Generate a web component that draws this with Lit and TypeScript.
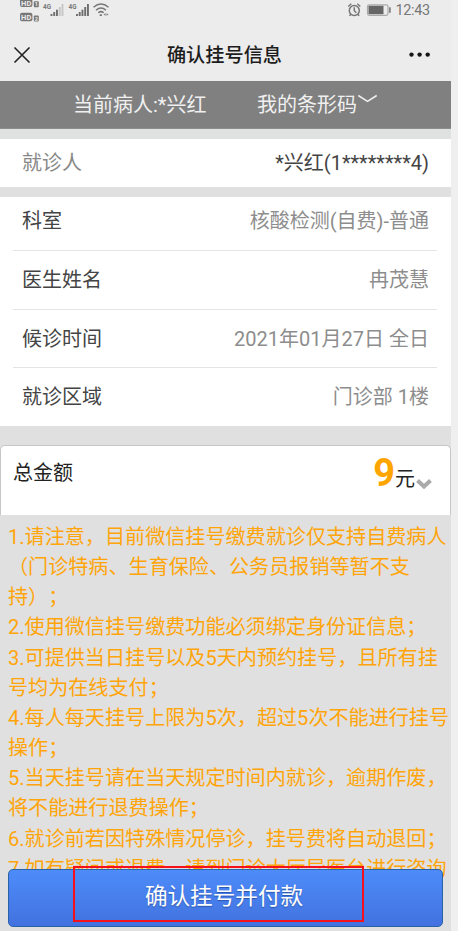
import { LitElement, html, css, svg } from "lit";
import { customElement } from "lit/decorators.js";

const details = [
  ["科室", "核酸检测(自费)-普通"],
  ["医生姓名", "冉茂慧"],
  ["候诊时间", "2021年01月27日 全日"],
  ["就诊区域", "门诊部 1楼"],
];

const notes = [
  "1.请注意，目前微信挂号缴费就诊仅支持自费病人",
  "（门诊特病、生育保险、公务员报销等暂不支",
  "持）；",
  "2.使用微信挂号缴费功能必须绑定身份证信息；",
  "3.可提供当日挂号以及5天内预约挂号，且所有挂",
  "号均为在线支付；",
  "4.每人每天挂号上限为5次，超过5次不能进行挂号",
  "操作；",
  "5.当天挂号请在当天规定时间内就诊，逾期作废，",
  "将不能进行退费操作；",
  "6.就诊前若因特殊情况停诊，挂号费将自动退回；",
  "7.如有疑问或退费，请到门诊大厅导医台进行咨询",
];

const hd = (y: number, n: string) => svg`
  <rect x="20" y=${y} width="12.4" height="8.4" rx="2" fill="#777"></rect>
  <text x="26.2" y=${y + 6.9} text-anchor="middle" font-size="7.5" font-weight="700" fill="#ececec">HD</text>
  <rect x="33.8" y=${y + 2.6} width="5" height="6" rx="1" fill="#777"></rect>
  <text x="36.3" y=${y + 7.7} text-anchor="middle" font-size="5.5" font-weight="700" fill="#ececec">${n}</text>`;

const signal = (x: number, faint: boolean) => svg`
  <text x=${x} y="8.8" font-size="7.6" font-weight="700" fill="#777" textLength="8" lengthAdjust="spacingAndGlyphs">4G</text>
  ${[2, 4, 6.3, 9, 12].map(
    (h, i) => svg`<rect x=${x + 7.5 + i * 2.75} y=${16 - h} width="1.9" height=${h}
      fill=${faint && i > 2 ? "#c6c6c6" : "#6e6e6e"}></rect>`
  )}`;

@customElement("app-root")
export class AppRoot extends LitElement {
  static styles = css`
    :host {
      display: block;
      width: 458px;
      height: 931px;
      overflow: hidden;
      background: #efefef;
      font-family: Roboto, "Noto Sans CJK SC", sans-serif;
      font-size: 20px;
      color: #444;
      text-spacing-trim: space-all;
    }
    * { box-sizing: border-box; }
    svg { display: block; flex: none; }
    .page {
      position: relative;
      width: 451px;
      height: 931px;
      overflow: hidden;
      background: #e0e0e0;
      white-space: nowrap;
    }
    .head { height: 81px; background: #ececec; }
    .status { display: flex; justify-content: space-between; height: 26px; }
    .nav {
      display: flex;
      align-items: center;
      justify-content: space-between;
      height: 58px;
      padding: 0 20px 0 13px;
    }
    .title { font-size: 19.2px; font-weight: 500; color: #1c1c1c; margin-left: 9px; padding-top: 2px; line-height: 28px; }
    .patient {
      display: flex;
      height: 48px;
      padding-left: 73px;
      line-height: 48px;
      background: #808080;
      border-bottom: 1px solid #8c8e8d;
      color: #f0f0f0;
    }
    .name { width: 184px; }
    .code { display: flex; }
    .gap { height: 10px; background: #dfe2e1; }
    .row { display: flex; justify-content: space-between; align-items: center; }
    .visitor { height: 48px; padding: 0 22px 3px; background: #fff; }
    .visitor .label { color: #888; }
    .list { margin-top: 10px; height: 229px; padding: 0 14px 0 13px; background: #fff; }
    .item {
      height: 58.5px;
      padding: 0 8px 2px 9px;
      border-bottom: 1.5px solid #e4e4e4;
    }
    .item:first-child { height: 54px; padding-bottom: 8px; }
    .item:last-child { border: 0; padding-bottom: 4px; }
    .value { color: #8d8d8d; }
    .total {
      display: flex;
      justify-content: space-between;
      margin-top: 19px;
      height: 70px;
      padding: 0 17px 0 12px;
      background: #fff;
      border: 1px solid #c6c6c6;
      border-width: 1px 1px 0;
      border-radius: 5px 5px 0 0;
      color: #222;
    }
    .total-label { line-height: 54px; }
    .amount { display: flex; align-items: baseline; line-height: 54px; }
    .num { font-size: 38px; font-weight: 700; color: #ffa500; }
    .arrow { position: relative; top: 5px; }
    .notes { padding: 7px 0 0 8px; font-size: 20.1px; line-height: 30.15px; color: #ffa50a; }
    .pay {
      position: absolute;
      left: 8px;
      top: 869px;
      width: 435px;
      height: 58px;
      padding: 0 3px 2px 0;
      border: 1px solid #2a62a8;
      border-radius: 5px;
      background: linear-gradient(#4d8cfa, #4272df);
      color: #fff;
      font: 22.6px/52px Roboto, "Noto Sans CJK SC", sans-serif;
      text-align: center;
      text-shadow: 0 1px 1px #2b55a8;
    }
    .frame {
      position: absolute;
      left: 73px;
      top: 866px;
      width: 291px;
      height: 56px;
      border: 2px solid #f5101c;
    }
  `;

  render() {
    return html`<div class="page">
      <div class="head">
        <div class="status">
          <svg width="120" height="26" font-family="Roboto, sans-serif">
            ${hd(-1.3, "1")} ${hd(12.8, "2")} ${signal(43, true)} ${signal(68.5, false)}
            <g fill="none" stroke="#777" stroke-width="1.5">
              <path d="M93.5 7.3Q101 0.8 108.5 7.3M96 10.3Q101 5.8 106 10.3M98.3 12.8Q101 10.5 103.7 12.8"></path>
            </g>
            <path d="M99.7 14.3h2.2v1.7h-2.2zM103.5 14.5l2-1.3v2.6zM108.5 14.5l-2-1.3v2.6z" fill="#777"></path>
          </svg>
          <svg width="104" height="26" font-family="Roboto, sans-serif">
            <g fill="none" stroke="#777" stroke-width="1.5">
              <circle cx="7.3" cy="10.5" r="5"></circle>
              <path d="M7.3 7.3v3.5l2 2M1.3 6.5l3-2.7M13.3 6.5l-3-2.7M3.8 14.3l-1.3 1.6M10.8 14.3l1.3 1.6"></path>
            </g>
            <rect x="20.5" y="4.8" width="20.5" height="10.5" rx="1.8" fill="none" stroke="#aaa" stroke-width="1.2"></rect>
            <rect x="21.5" y="5.8" width="15" height="8.4" fill="#666"></rect>
            <rect x="42" y="7.3" width="1.8" height="5.5" fill="#888"></rect>
            <text x="48.5" y="15.3" font-size="14.4" fill="#777" textLength="34.5">12:43</text>
          </svg>
        </div>
        <div class="nav">
          <svg width="18" height="18"><path d="M1.5 1.5l15 15M16.5 1.5l-15 15" stroke="#222" stroke-width="1.6"></path></svg>
          <div class="title">确认挂号信息</div>
          <svg width="22" height="6" fill="#161616"><circle cx="2.5" cy="2.6" r="2.2"></circle><circle cx="10.6" cy="2.6" r="2.2"></circle><circle cx="18.7" cy="2.6" r="2.2"></circle></svg>
        </div>
      </div>
      <div class="patient">
        <div class="name">当前病人:*兴红</div>
        <div class="code">我的条形码<svg width="22" height="30"><path d="M1.3 14.5L10.5 20.3L19.7 14.5" fill="none" stroke="#f0f0f0" stroke-width="1.5"></path></svg></div>
      </div>
      <div class="gap"></div>
      <div class="row visitor"><span class="label">就诊人</span><span>*兴红(1********4)</span></div>
      <div class="list">
        ${details.map(([k, v]) => html`<div class="row item"><span>${k}</span><span class="value">${v}</span></div>`)}
      </div>
      <div class="total">
        <div class="total-label">总金额</div>
        <div class="amount"><span class="num">9</span><span>元</span><svg class="arrow" width="18" height="14"><path d="M2.5 3.5L9 9.5L15.5 3.5" fill="none" stroke="#aaa" stroke-width="4"></path></svg></div>
      </div>
      <div class="notes">${notes.map((n) => html`<div>${n}</div>`)}</div>
      <button class="pay">确认挂号并付款</button>
      <div class="frame"></div>
    </div>`;
  }
}
